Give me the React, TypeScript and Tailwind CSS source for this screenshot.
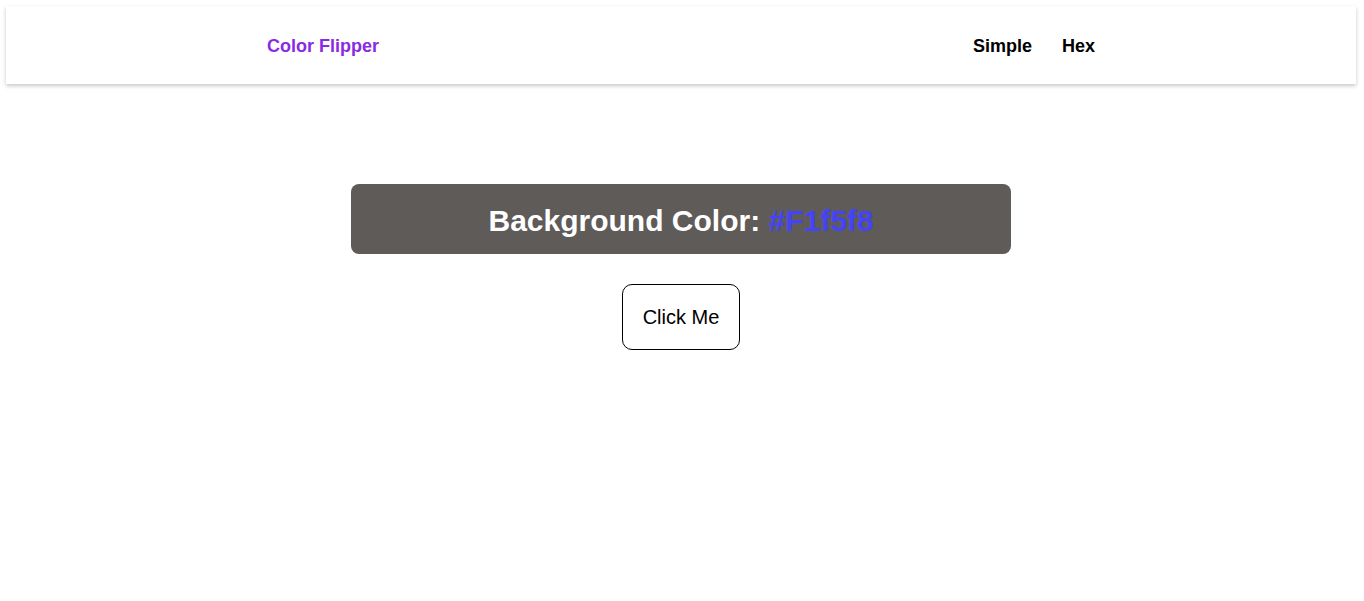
const NAV_LINKS = ["Simple", "Hex"];

export default function App() {
  return (
    <div className="min-h-screen bg-white pt-[6px] pl-[6px] pr-[8px] font-['Liberation_Sans',Arial,sans-serif]">
      {/* Navbar */}
      <nav className="h-[78px] bg-white shadow-[0_2px_4px_rgba(0,0,0,0.22)]">
        <div className="mx-auto flex h-full w-[828px] items-center justify-between pt-[3px]">
          <h1 className="text-[18px] font-bold text-[#8a2be2]">Color Flipper</h1>
          <ul className="flex items-center gap-[30px]">
            {NAV_LINKS.map((link) => (
              <li key={link} className="text-[18px] font-bold text-black">
                {link}
              </li>
            ))}
          </ul>
        </div>
      </nav>

      {/* Main */}
      <main className="mt-[100px] flex flex-col items-center">
        <div className="flex h-[70px] w-[660px] items-center justify-center rounded-lg bg-[#5f5b59] pt-[3px]">
          <h2 className="text-[30px] font-bold text-white">
            Background Color: <span className="text-[#4343f8]">#F1f5f8</span>
          </h2>
        </div>
        <button className="mt-[30px] h-[66px] w-[118px] rounded-[10px] border border-black bg-white text-[20px] text-black">
          Click Me
        </button>
      </main>
    </div>
  );
}
